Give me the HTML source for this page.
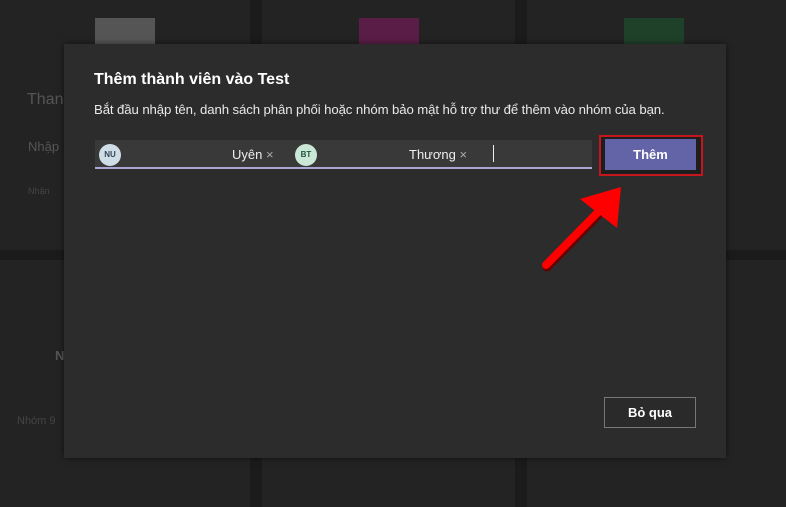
<!DOCTYPE html>
<html><head><meta charset="utf-8"><style>
body{margin:0;width:786px;height:507px;background:#1b1b1b;position:relative;overflow:hidden;font-family:"Liberation Sans",sans-serif}
.c{position:absolute;background:#232323}
.a{position:absolute}
</style></head><body>
<div class="c" style="left:0;top:0;width:250px;height:250px"></div>
<div class="c" style="left:262px;top:0;width:253px;height:250px"></div>
<div class="c" style="left:527px;top:0;width:259px;height:250px"></div>
<div class="c" style="left:0;top:260px;width:250px;height:247px"></div>
<div class="c" style="left:262px;top:260px;width:253px;height:247px"></div>
<div class="c" style="left:527px;top:260px;width:259px;height:247px"></div>
<div class="a" style="left:95px;top:18px;width:60px;height:30px;background:#555"></div>
<div class="a" style="left:359px;top:18px;width:60px;height:30px;background:#5a1d48"></div>
<div class="a" style="left:624px;top:18px;width:60px;height:30px;background:#1f4029"></div>
<div class="a" style="left:27px;top:91px;color:#555;font-size:16px">Than</div>
<div class="a" style="left:28px;top:139px;color:#555;font-size:13px">Nhập</div>
<div class="a" style="left:28px;top:186px;color:#444;font-size:9px">Nhận</div>
<div class="a" style="left:55px;top:348px;color:#555;font-size:13px;font-weight:bold">N</div>
<div class="a" style="left:17px;top:415px;color:#444;font-size:11px">Nhóm 9</div>
<div class="a" style="left:64px;top:44px;width:662px;height:414px;background:#2c2c2c;box-shadow:0 0 6px rgba(0,0,0,.5)"></div>
<div class="a" style="left:94px;top:71px;color:#fff;font-size:16px;font-weight:bold">Thêm thành viên vào Test</div>
<div class="a" style="left:94px;top:102px;color:#e8e8e8;font-size:13.2px;letter-spacing:-0.1px">Bắt đầu nhập tên, danh sách phân phối hoặc nhóm bảo mật hỗ trợ thư để thêm vào nhóm của bạn.</div>
<div class="a" style="left:95px;top:140px;width:497px;height:27px;background:#393939;border-bottom:2px solid #a9a6d6"></div>
<div class="a" style="left:99px;top:144px;width:22px;height:22px;border-radius:50%;background:#cfdde6;color:#345;font-size:8px;font-weight:bold;text-align:center;line-height:22px">NU</div>
<div class="a" style="left:232px;top:147px;color:#eee;font-size:13px">Uyên <span style="color:#aaa">×</span></div>
<div class="a" style="left:295px;top:144px;width:22px;height:22px;border-radius:50%;background:#cbe8d6;color:#254;font-size:8px;font-weight:bold;text-align:center;line-height:22px">BT</div>
<div class="a" style="left:409px;top:147px;color:#eee;font-size:13px">Thương <span style="color:#aaa">×</span></div>
<div class="a" style="left:493px;top:145px;width:1px;height:17px;background:#eee"></div>
<div class="a" style="left:599px;top:135px;width:100px;height:37px;border:2px solid #c4161c;background:#1e1e1e"></div>
<div class="a" style="left:605px;top:139px;width:91px;height:31px;background:#6264a7;color:#fff;font-size:13px;font-weight:bold;text-align:center;line-height:31px">Thêm</div>
<div class="a" style="left:604px;top:397px;width:90px;height:29px;border:1px solid #777;background:#2a2a2a;color:#fff;font-size:13px;font-weight:bold;text-align:center;line-height:29px">Bỏ qua</div>
<svg class="a" style="left:0;top:0" width="786" height="507">
<line x1="546" y1="265" x2="602" y2="208" stroke="#600" stroke-width="9" stroke-linecap="round" transform="translate(1,2)"/>
<line x1="546" y1="265" x2="602" y2="208" stroke="#f00" stroke-width="8" stroke-linecap="round"/>
<polygon points="621,187 580,199 617,228" fill="#f00"/>
</svg>
</body></html>
